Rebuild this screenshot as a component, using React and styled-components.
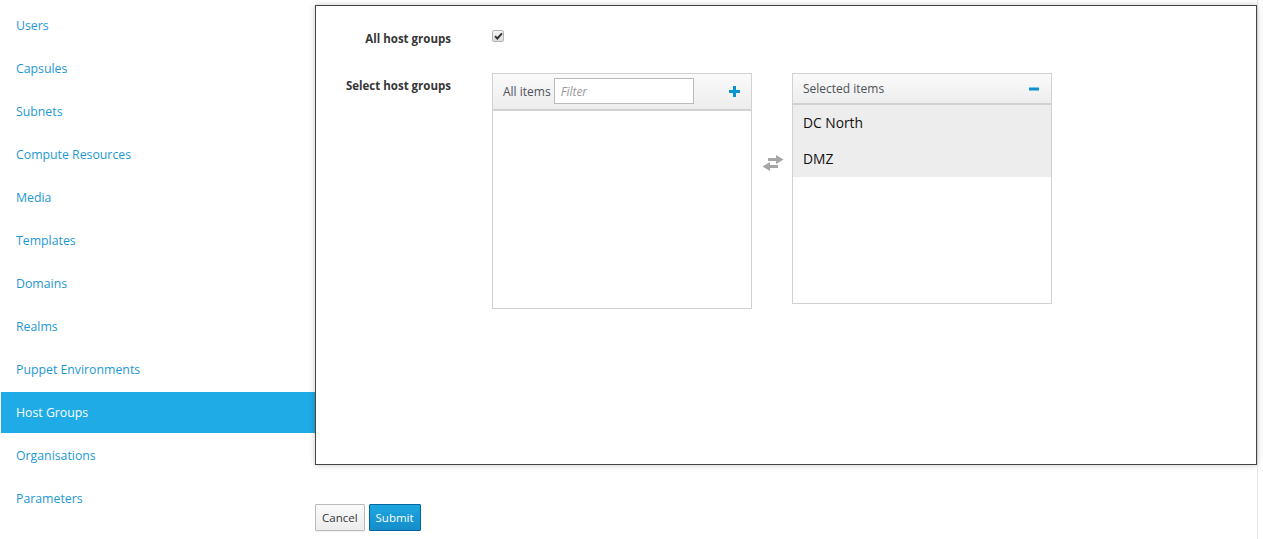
import React from "react";
import styled, { createGlobalStyle } from "styled-components";

const Global = createGlobalStyle`
  html, body { margin: 0; padding: 0; background: #fff; }
  body { font-family: "Open Sans", "Noto Sans", sans-serif; color: #363636; }
  * { box-sizing: border-box; }
`;

const Page = styled.div`
  display: flex;
  align-items: flex-start;
  height: 539px;
  overflow: hidden;
`;

const Sidebar = styled.nav`
  width: 314px;
  margin-left: 1px;
  padding-top: 4px;
  display: flex;
  flex-direction: column;
`;

const NavItem = styled.a`
  display: flex;
  align-items: center;
  height: 41px;
  margin: 1px 0;
  padding-left: 15px;
  padding-bottom: 1px;
  font-size: 12.3px;
  text-decoration: none;
  cursor: pointer;
  color: ${(p) => (p.$active ? "#fff" : "#1d98d3")};
  background: ${(p) => (p.$active ? "#1eabe6" : "transparent")};
`;

const Main = styled.div`
  width: 943px;
  height: 539px;
  display: flex;
  flex-direction: column;
  border-right: 1px solid #e6e6e6;
`;

const Panel = styled.section`
  margin-top: 5px;
  height: 460px;
  border: 1px solid #444;
  background: #fff;
  box-shadow: 0 0 6px rgba(0, 0, 0, 0.22);
  padding-top: 24px;
  display: grid;
  grid-template-columns: 136px 260px 40px 260px;
  column-gap: 40px;
  grid-auto-rows: min-content;
  row-gap: 26px;
`;

const Label = styled.label`
  grid-column: 1;
  text-align: right;
  font-size: 11.5px;
  font-weight: 700;
  line-height: 16px;
  color: #363636;
  padding-top: ${(p) => p.$pt || 0}px;
  padding-right: 1px;
  margin-top: ${(p) => (p.$pt ? 0 : 1)}px;
`;

const CheckCell = styled.div`
  grid-column: 2 / span 3;
  height: 16px;
  display: flex;
  align-items: flex-start;
`;

const CheckBox = styled.span`
  display: flex;
  align-items: center;
  justify-content: center;
  width: 12px;
  height: 12px;
  border: 1px solid #b5b5b5;
  border-radius: 2px;
  background: linear-gradient(#f6f6f6, #dcdcdc);
`;

const DualList = styled.div`
  grid-column: 2 / span 3;
  display: flex;
  align-items: flex-start;
`;

const ListBox = styled.div`
  width: 260px;
  height: ${(p) => p.$h}px;
  border: 1px solid #d1d1d1;
  background: #fff;
  display: flex;
  flex-direction: column;
`;

const ListHeader = styled.div`
  display: flex;
  align-items: center;
  height: ${(p) => p.$h}px;
  padding: 0 10px;
  background: linear-gradient(#fafafa, #ededed);
  border-bottom: 2px solid #d1d1d1;
  font-size: 12px;
  color: #4d5258;
  gap: 3px;
`;

const HeaderTitle = styled.span`
  flex: ${(p) => (p.$grow ? 1 : "none")};
  margin-top: -1px;
`;

const FilterInput = styled.input`
  width: 140px;
  height: 26px;
  margin-top: -1px;
  border: 1px solid #bbb;
  padding: 0 6px;
  font-family: "Open Sans", sans-serif;
  font-size: 12px;
  background: #fff;
  &::placeholder { color: #999; font-style: italic; }
`;

const Spacer = styled.span`
  flex: 1;
`;

const IconBtn = styled.span`
  display: inline-flex;
  align-items: center;
  justify-content: center;
  width: 12px;
  height: 12px;
  margin-right: 1px;
`;

const Middle = styled.div`
  width: 40px;
  display: flex;
  justify-content: center;
  padding-top: 82px;
  padding-left: 1px;
`;

const Item = styled.div`
  height: 36px;
  display: flex;
  align-items: center;
  padding-left: 10px;
  padding-bottom: 2px;
  background: #ededed;
  font-size: 13.8px;
  color: #111;
`;

const Actions = styled.div`
  display: flex;
  gap: 4px;
  margin-top: 39px;
`;

const Button = styled.button`
  height: 27px;
  padding: 0 6px;
  font-family: "Open Sans", sans-serif;
  font-size: 11.5px;
  border: 1px solid ${(p) => (p.$primary ? "#00659c" : "#bbb")};
  color: ${(p) => (p.$primary ? "#fff" : "#363636")};
  background: ${(p) =>
    p.$primary ? "linear-gradient(#1ea7e1, #148dc9)" : "linear-gradient(#fafafa, #ededed)"};
  border-radius: 1px;
  box-shadow: ${(p) => (p.$primary ? "none" : "0 1px 1px rgba(0,0,0,0.06)")};
`;

const items = [
  "Users",
  "Capsules",
  "Subnets",
  "Compute Resources",
  "Media",
  "Templates",
  "Domains",
  "Realms",
  "Puppet Environments",
  "Host Groups",
  "Organisations",
  "Parameters",
];

export default function App() {
  return (
    <>
      <Global />
      <Page>
        <Sidebar>
          {items.map((it) => (
            <NavItem key={it} $active={it === "Host Groups"}>
              {it}
            </NavItem>
          ))}
        </Sidebar>
        <Main>
          <Panel>
            <Label>All host groups</Label>
            <CheckCell>
              <CheckBox>
                <svg width="9" height="8" viewBox="0 0 9 8">
                  <path d="M1 4.2 L3.3 6.5 L8 1.3" stroke="#333" strokeWidth="1.9" fill="none" />
                </svg>
              </CheckBox>
            </CheckCell>
            <Label $pt={5}>Select host groups</Label>
            <DualList>
              <ListBox $h={236}>
                <ListHeader $h={37}>
                  <HeaderTitle>All items</HeaderTitle>
                  <FilterInput placeholder="Filter" />
                  <Spacer />
                  <IconBtn>
                    <svg width="11" height="11" viewBox="0 0 11 11">
                      <path d="M4 0h3v4h4v3H7v4H4V7H0V4h4z" fill="#0a93d2" />
                    </svg>
                  </IconBtn>
                </ListHeader>
              </ListBox>
              <Middle>
                <svg width="22" height="16" viewBox="0 0 22 16">
                  <path d="M6 3h8V0l7.5 4.5L14 9V6H6z" fill="#a6a6a6" />
                  <path d="M16 10H8V7L0.5 11.5 8 16v-3h8z" fill="#a6a6a6" />
                </svg>
              </Middle>
              <ListBox $h={231}>
                <ListHeader $h={31}>
                  <HeaderTitle $grow>Selected items</HeaderTitle>
                  <IconBtn>
                    <svg width="10" height="4" viewBox="0 0 10 4">
                      <rect x="0" y="0.5" width="10" height="3" fill="#0a93d2" />
                    </svg>
                  </IconBtn>
                </ListHeader>
                <Item>DC North</Item>
                <Item>DMZ</Item>
              </ListBox>
            </DualList>
          </Panel>
          <Actions>
            <Button>Cancel</Button>
            <Button $primary>Submit</Button>
          </Actions>
        </Main>
      </Page>
    </>
  );
}
